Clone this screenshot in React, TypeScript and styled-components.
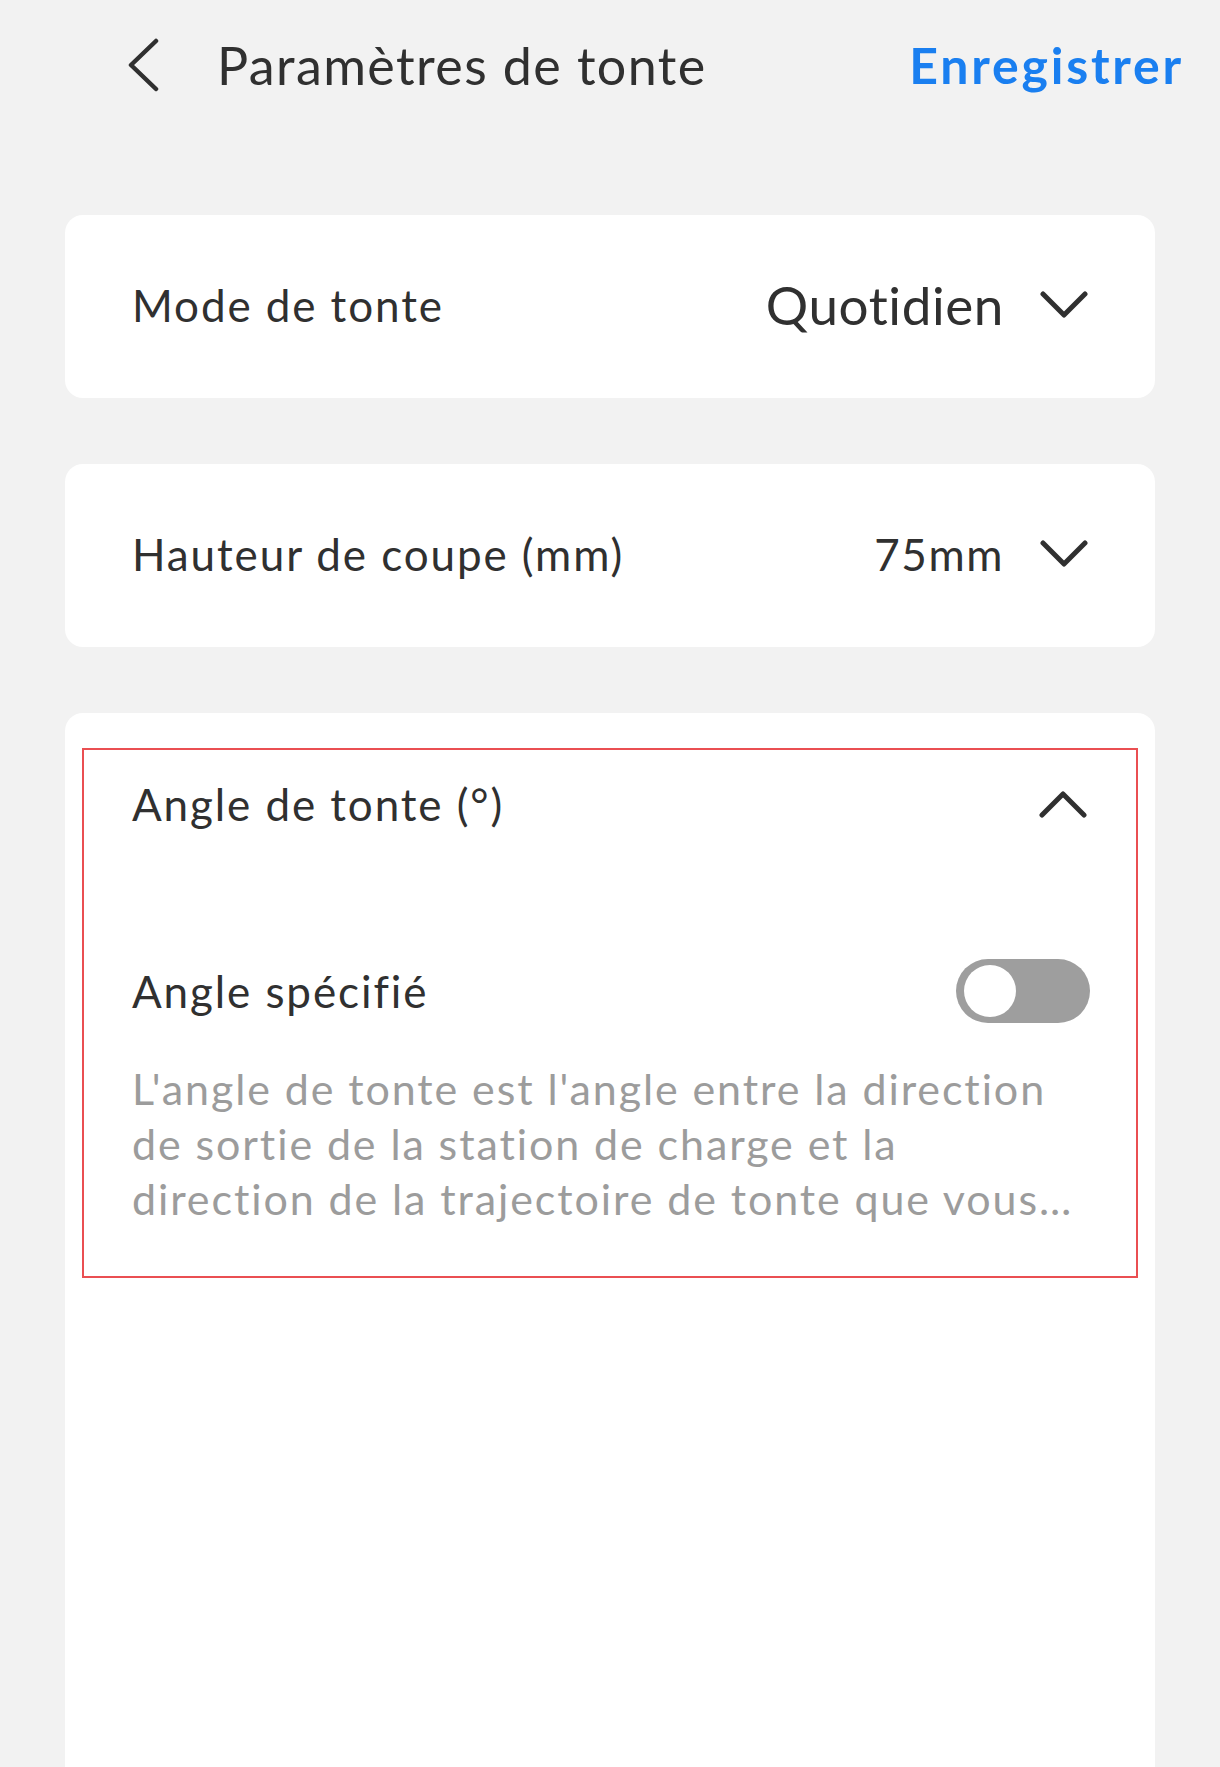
import React, { useState } from 'react';
import styled, { createGlobalStyle } from 'styled-components';

const textDark = '#303030';
const textGrey = '#9c9c9c';
const blue = '#1a7ff0';

const GlobalStyle = createGlobalStyle`
  html, body {
    margin: 0;
    padding: 0;
    background: #f2f2f2;
  }
  body {
    font-family: 'Lato', 'Noto Sans', sans-serif;
    color: ${textDark};
  }
`;

const Chevron = ({ up }: { up?: boolean }) => (
  <svg width="48" height="28" viewBox="0 0 48 28" fill="none">
    <polyline
      points={up ? '3,25 24,4 45,25' : '3,3 24,24 45,3'}
      stroke={textDark}
      strokeWidth="5"
      strokeLinecap="round"
      strokeLinejoin="round"
    />
  </svg>
);

export default function App() {
  const [angleOn, setAngleOn] = useState(false);

  return (
    <Page>
      <GlobalStyle />
      <Header>
        <BackButton aria-label="Retour">
          <svg width="36" height="54" viewBox="0 0 36 54" fill="none">
            <polyline
              points="31,3 6,27 31,51"
              stroke={textDark}
              strokeWidth="4.5"
              strokeLinecap="round"
              strokeLinejoin="round"
            />
          </svg>
        </BackButton>
        <Title>Paramètres de tonte</Title>
        <SaveButton>Enregistrer</SaveButton>
      </Header>

      <List>
        <Card>
          <Row>
            <Label>Mode de tonte</Label>
            <ValueWrap>
              <Value $large>Quotidien</Value>
              <Chevron />
            </ValueWrap>
          </Row>
        </Card>

        <Card>
          <Row>
            <Label>Hauteur de coupe (mm)</Label>
            <ValueWrap>
              <Value>75mm</Value>
              <Chevron />
            </ValueWrap>
          </Row>
        </Card>

        <TallCard>
          <Highlight>
            <SectionHead>
              <Label>Angle de tonte (°)</Label>
              <Chevron up />
            </SectionHead>
            <ToggleRow>
              <Label>Angle spécifié</Label>
              <Toggle $on={angleOn} onClick={() => setAngleOn(!angleOn)}>
                <Knob />
              </Toggle>
            </ToggleRow>
            <Description>
              L'angle de tonte est l'angle entre la direction de sortie de la station de charge et la
              direction de la trajectoire de tonte que vous souhaitez définir pour votre tondeuse.
            </Description>
          </Highlight>
        </TallCard>
      </List>
    </Page>
  );
}

const Page = styled.div`
  width: 1220px;
  min-height: 1767px;
  background: #f2f2f2;
  overflow: hidden;
`;

const Header = styled.header`
  height: 130px;
  display: flex;
  align-items: center;
  padding: 0 36px 0 125px;
  box-sizing: border-box;
`;

const BackButton = styled.button`
  display: flex;
  align-items: center;
  background: transparent;
  border: none;
  padding: 0;
  margin-right: 56px;
  cursor: pointer;
`;

const Title = styled.h1`
  flex: 1;
  margin: 0;
  font-size: 52px;
  font-weight: 400;
  letter-spacing: 1.4px;
  color: ${textDark};
`;

const SaveButton = styled.button`
  background: transparent;
  border: none;
  padding: 0;
  font-family: 'Lato', 'Noto Sans', sans-serif;
  font-size: 50px;
  font-weight: 700;
  letter-spacing: 2.8px;
  color: ${blue};
  cursor: pointer;
`;

const List = styled.main`
  display: flex;
  flex-direction: column;
  gap: 66px;
  padding: 85px 65px 0;
`;

const Card = styled.section`
  background: #ffffff;
  border-radius: 18px;
  height: 183px;
  padding: 0 67px;
  box-sizing: border-box;
  display: flex;
  align-items: center;
`;

const TallCard = styled.section`
  background: #ffffff;
  border-radius: 18px 18px 0 0;
  min-height: 1060px;
  padding: 35px 17px 0;
  box-sizing: border-box;
`;

const Highlight = styled.div`
  border: 2px solid #ea4f52;
  padding: 0 46px 50px 48px;
`;

const Row = styled.div`
  flex: 1;
  display: flex;
  align-items: center;
  justify-content: space-between;
  margin-top: -4px;
`;

const Label = styled.span`
  font-size: 44px;
  letter-spacing: 1.9px;
  color: ${textDark};
`;

const ValueWrap = styled.div`
  display: flex;
  align-items: center;
  gap: 36px;
`;

const Value = styled.span<{ $large?: boolean }>`
  font-size: ${(p) => (p.$large ? '53px' : '44px')};
  letter-spacing: ${(p) => (p.$large ? '0.6px' : '1.6px')};
  color: ${textDark};
`;

const SectionHead = styled.div`
  height: 108px;
  display: flex;
  align-items: center;
  justify-content: space-between;
  padding-right: 3px;
`;

const ToggleRow = styled.div`
  margin-top: 101px;
  height: 64px;
  display: flex;
  align-items: center;
  justify-content: space-between;
`;

const Toggle = styled.button<{ $on: boolean }>`
  width: 134px;
  height: 64px;
  border-radius: 32px;
  border: none;
  padding: 6px 6px 6px 8px;
  background: ${(p) => (p.$on ? blue : '#9e9e9e')};
  display: flex;
  justify-content: ${(p) => (p.$on ? 'flex-end' : 'flex-start')};
  align-items: center;
  cursor: pointer;
`;

const Knob = styled.span`
  width: 52px;
  height: 52px;
  border-radius: 50%;
  background: #ffffff;
`;

const Description = styled.p`
  margin: 38px 0 0;
  font-size: 43px;
  line-height: 55px;
  letter-spacing: 1.9px;
  color: ${textGrey};
  display: -webkit-box;
  -webkit-line-clamp: 3;
  -webkit-box-orient: vertical;
  overflow: hidden;
`;
